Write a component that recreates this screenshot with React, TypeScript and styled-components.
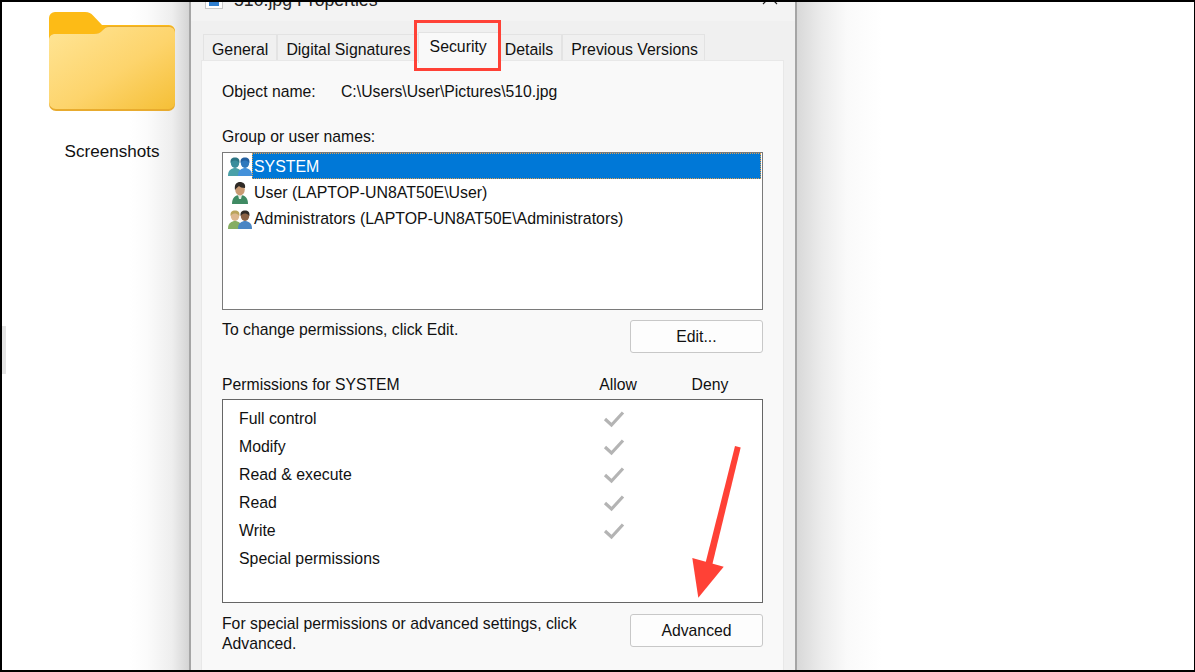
import styled, { createGlobalStyle } from "styled-components";

const GlobalStyle = createGlobalStyle`
  html, body {
    margin: 0;
    padding: 0;
    background: #fff;
  }
  body {
    font-family: "Liberation Sans", Arial, sans-serif;
    color: #111;
  }
`;

const TABS = ["General", "Digital Signatures", "Security", "Details", "Previous Versions"];
const PERMISSIONS = [
  { name: "Full control", allowed: true },
  { name: "Modify", allowed: true },
  { name: "Read & execute", allowed: true },
  { name: "Read", allowed: true },
  { name: "Write", allowed: true },
  { name: "Special permissions", allowed: false },
];

function FolderIcon() {
  return (
    <svg width="126" height="99" viewBox="0 0 126 99">
      <defs>
        <linearGradient id="folderFront" x1="0" y1="0" x2="1" y2="1">
          <stop offset="0" stopColor="#ffe596" />
          <stop offset="0.55" stopColor="#fdd46c" />
          <stop offset="1" stopColor="#f5bf36" />
        </linearGradient>
      </defs>
      <path d="M0 6a6 6 0 0 1 6-6h30c4 0 6 1.500 8 3.500l9 9.500h67a6 6 0 0 1 6 6v30H0z" fill="#fdbb16" />
      <path d="M0 28c0-4 3-6 6-6h39c4 0 6-1 9-4 2-2 3-4 6-4h60c3 0 6 2 6 6v72a7 7 0 0 1-6 7H7a7 7 0 0 1-7-7z" fill="#e8ab2e" />
      <path d="M0 28c0-4 3-6 6-6h39c4 0 6-1 9-4 2-2 3-3 6-3h60c3 0 6 2 6 6v69a7 7 0 0 1-6 7H7a7 7 0 0 1-7-7z" fill="url(#folderFront)" />
    </svg>
  );
}

function Person({ x, head, hair, body }: { x: number; head: string; hair: string; body: string }) {
  return (
    <g transform={`translate(${x} 0)`}>
      <path d="M0 20c0-5 2-7 6-8h2c4 1 6 3 6 8z" fill={body} />
      <ellipse cx="7" cy="7" rx="4.200" ry="5" fill={head} />
      <path d="M2.600 7C2 3 4 1.500 7 1.500S12 3 11.400 7C10 5 8 4.500 6.500 4.500 5 4.500 3.500 5.500 2.600 7z" fill={hair} />
    </g>
  );
}

function GroupIcon({ back, front }: { back: [string, string, string]; front: [string, string, string] }) {
  return (
    <svg width="24" height="20" viewBox="0 0 24 20">
      <Person x={0} head={back[0]} hair={back[1]} body={back[2]} />
      <Person x={10} head={front[0]} hair={front[1]} body={front[2]} />
    </svg>
  );
}

function UserIcon() {
  return (
    <svg width="24" height="24" viewBox="0 0 24 24">
      <path d="M4 23c0-6 3-9 8-9s8 3 8 9z" fill="#3f8a63" />
      <path d="M10 14h4l-1 4h-2z" fill="#e6ece4" />
      <ellipse cx="12" cy="8.500" rx="4.800" ry="6" fill="#c99a73" />
      <path d="M7 9c-1-6 2-8 5-8s6 2 5 6c-3 0-5-1-6-2-1 1-3 2-4 4z" fill="#2f2a26" />
    </svg>
  );
}

function Check() {
  return (
    <svg width="22" height="18" viewBox="0 0 22 18">
      <path d="M2 9l6.500 6L20 2.500" fill="none" stroke="#b4b4b4" strokeWidth="3.200" />
    </svg>
  );
}

export default function App() {
  return (
    <>
      <GlobalStyle />
      <Screen>
        <Desktop>
          <FolderItem>
            <FolderIcon />
            <FolderLabel>Screenshots</FolderLabel>
          </FolderItem>
          <ScrollThumb />
        </Desktop>
        <Dialog>
          <TitleBar>
            <TitleIcon />
            <TitleText>510.jpg Properties</TitleText>
            <CloseGlyph viewBox="0 0 16 16">
              <path d="M1 1l14 14M15 1L1 15" stroke="#222" strokeWidth="1.200" />
            </CloseGlyph>
          </TitleBar>
          <TabStrip>
            {TABS.map((tab) => (
              <Tab key={tab} $active={tab === "Security"}>
                {tab}
                {tab === "Security" && <Highlight />}
              </Tab>
            ))}
          </TabStrip>
          <Panel>
            <ObjectRow>
              <ObjectLabel>Object name:</ObjectLabel>
              <span>C:\Users\User\Pictures\510.jpg</span>
            </ObjectRow>
            <SectionLabel>Group or user names:</SectionLabel>
            <UserList>
              <UserRow>
                <IconSlot>
                  <GroupIcon
                    back={["#3a8d9c", "#2c7483", "#4aa0a8"]}
                    front={["#2f78bd", "#225f9f", "#4491da"]}
                  />
                </IconSlot>
                <SelectedName>SYSTEM</SelectedName>
              </UserRow>
              <UserRow>
                <IconSlot><UserIcon /></IconSlot>
                <UserName>User (LAPTOP-UN8AT50E\User)</UserName>
              </UserRow>
              <UserRow>
                <IconSlot>
                  <GroupIcon
                    back={["#dcb78f", "#b9a45c", "#86ad62"]}
                    front={["#8a6246", "#2f2a26", "#4b86c4"]}
                  />
                </IconSlot>
                <UserName>Administrators (LAPTOP-UN8AT50E\Administrators)</UserName>
              </UserRow>
            </UserList>
            <ActionRow>
              <ActionText>To change permissions, click Edit.</ActionText>
              <PanelButton>Edit...</PanelButton>
            </ActionRow>
            <PermissionHeader>
              <PermissionTitle>Permissions for SYSTEM</PermissionTitle>
              <ColumnHead>Allow</ColumnHead>
              <ColumnHead>Deny</ColumnHead>
            </PermissionHeader>
            <PermissionBox>
              {PERMISSIONS.map((p) => (
                <PermissionRow key={p.name}>
                  <span>{p.name}</span>
                  <CheckCell>{p.allowed && <Check />}</CheckCell>
                </PermissionRow>
              ))}
              <Arrow viewBox="0 0 60 160">
                <path d="M49 0L54.700 1.500L25.700 121L19.500 117z" fill="#ff4136" />
                <path d="M6.300 112L37.700 120.700L12.300 151.700z" fill="#ff4136" />
              </Arrow>
            </PermissionBox>
            <FooterRow>
              <FooterText>For special permissions or advanced settings, click Advanced.</FooterText>
              <PanelButton>Advanced</PanelButton>
            </FooterRow>
          </Panel>
        </Dialog>
        <RightShade />
      </Screen>
    </>
  );
}

const Screen = styled.div`
  width: 1195px;
  height: 672px;
  box-sizing: border-box;
  border-top: 2px solid #000;
  border-left: 2px solid #000;
  border-bottom: 2px solid #000;
  border-right: 1px solid #000;
  display: flex;
  overflow: hidden;
  background: #fff;
`;

const Desktop = styled.div`
  position: relative;
  width: 187px;
  flex-shrink: 0;
  background: linear-gradient(to right, #fff 0, #fff 128px, #fbfbfb 145px, #eeeeee 170px, #d4d4d4 187px);
`;

const FolderItem = styled.div`
  display: flex;
  flex-direction: column;
  align-items: center;
  width: 126px;
  margin: 10px 0 0 47px;
`;

const FolderLabel = styled.div`
  margin-top: 31px;
  font-size: 17.1px;
  line-height: 20px;
`;

const ScrollThumb = styled.div`
  position: absolute;
  left: 0;
  top: 324px;
  width: 4px;
  height: 48px;
  background: #e4e4e4;
`;

const Dialog = styled.div`
  width: 608px;
  flex-shrink: 0;
  box-sizing: border-box;
  display: flex;
  flex-direction: column;
  background: #f0f0f0;
  border-left: 2px solid #a5a5a5;
  border-right: 2px solid #a5a5a5;
  padding: 0 11px 0 10px;
  font-size: 15.75px;
`;

const TitleBar = styled.div`
  height: 19px;
  margin: 0 -11px 0 -10px;
  padding: 0 17px 0 14px;
  display: flex;
  align-items: flex-start;
  gap: 11px;
  overflow: hidden;
  background: #f3f3f3;
`;

const TitleIcon = styled.div`
  width: 18px;
  height: 7px;
  box-sizing: border-box;
  border: 1px solid #c8c8c8;
  border-top: none;
  background: linear-gradient(#2f7fd0, #2f7fd0) center top / 10px 4px no-repeat #fff;
  flex-shrink: 0;
`;

const TitleText = styled.div`
  margin-top: -12px;
  line-height: 20px;
  font-size: 17.7px;
  color: #222;
  flex: 1;
`;

const CloseGlyph = styled.svg`
  width: 16px;
  height: 16px;
  margin-top: -13px;
  flex-shrink: 0;
`;

const TabStrip = styled.div`
  display: flex;
  align-items: flex-end;
  height: 39px;
  padding-left: 2px;
  font-size: 15.85px;
`;

const Tab = styled.div<{ $active?: boolean }>`
  position: relative;
  box-sizing: border-box;
  height: ${(p) => (p.$active ? "31px" : "26px")};
  margin: ${(p) => (p.$active ? "0 -3px -3px -2px" : "0")};
  padding: ${(p) => (p.$active ? "4px 11px 0" : "5px 8px 0")};
  line-height: 20px;
  border: 1px solid #e3e3e3;
  border-bottom: none;
  background: ${(p) => (p.$active ? "#f9f9f9" : "#f0f0f0")};
  z-index: ${(p) => (p.$active ? 2 : 1)};
  white-space: nowrap;

  &:last-child {
    padding-right: 6px;
  }
`;

const Highlight = styled.div`
  position: absolute;
  left: -5px;
  top: -13px;
  width: 87px;
  height: 51px;
  box-sizing: border-box;
  border: 3px solid #ff4136;
`;

const Panel = styled.div`
  flex: 1;
  display: flex;
  flex-direction: column;
  box-sizing: border-box;
  background: #f9f9f9;
  border: 1px solid #e8e8e8;
  border-bottom: none;
  padding: 21px 20px 0 20px;
`;

const ObjectRow = styled.div`
  display: flex;
  line-height: 20px;
`;

const ObjectLabel = styled.span`
  width: 119px;
`;

const SectionLabel = styled.div`
  margin-top: 25px;
  line-height: 20px;
`;

const UserList = styled.div`
  margin-top: 5px;
  height: 158px;
  box-sizing: border-box;
  border: 1px solid #7a7a7a;
  background: #fff;
  padding: 0 1px 1px;
  font-size: 15.9px;
`;

const UserRow = styled.div`
  display: flex;
  align-items: center;
  height: 26px;

  &:nth-child(2) {
    margin-top: 1px;
  }
`;

const IconSlot = styled.div`
  width: 24px;
  margin-left: 4px;
  display: flex;
  align-items: center;
`;

const UserName = styled.span`
  padding-left: 2px;
  white-space: nowrap;
`;

const SelectedName = styled.span`
  flex: 1;
  height: 26px;
  line-height: 27px;
  box-sizing: border-box;
  padding-left: 2px;
  background: #0078d7;
  color: #fff;
  outline: 1px dotted #e0a050;
  outline-offset: -1px;
`;

const ActionRow = styled.div`
  display: flex;
  justify-content: space-between;
  align-items: flex-start;
  margin-top: 10px;
`;

const ActionText = styled.div`
  line-height: 20px;
`;

const PanelButton = styled.div`
  width: 133px;
  height: 33px;
  box-sizing: border-box;
  display: flex;
  align-items: center;
  justify-content: center;
  border: 1px solid #c8c8c8;
  border-radius: 3px;
  background: #fdfdfd;
  flex-shrink: 0;
`;

const PermissionHeader = styled.div`
  display: flex;
  margin-top: 22px;
  line-height: 20px;
`;

const PermissionTitle = styled.div`
  width: 350px;
`;

const ColumnHead = styled.div`
  width: 92px;
  text-align: center;
`;

const PermissionBox = styled.div`
  position: relative;
  margin-top: 4px;
  height: 204px;
  box-sizing: border-box;
  border: 1px solid #666;
  background: #fff;
  padding: 5px 16px 0;
  font-size: 15.85px;
`;

const PermissionRow = styled.div`
  display: flex;
  align-items: center;
  height: 28px;
`;

const CheckCell = styled.div`
  margin-left: auto;
  width: 22px;
  height: 18px;
  margin-right: 121px;
`;

const Arrow = styled.svg`
  position: absolute;
  left: 463px;
  top: 46px;
  width: 60px;
  height: 160px;
  overflow: visible;
`;

const FooterRow = styled.div`
  display: flex;
  justify-content: space-between;
  align-items: flex-start;
  margin-top: 11px;
`;

const FooterText = styled.div`
  width: 370px;
  line-height: 20px;
`;

const RightShade = styled.div`
  flex: 1;
  background: linear-gradient(to right, #d8d8d8 0, #ececec 25px, #fafafa 50px, #fff 85px);
`;
